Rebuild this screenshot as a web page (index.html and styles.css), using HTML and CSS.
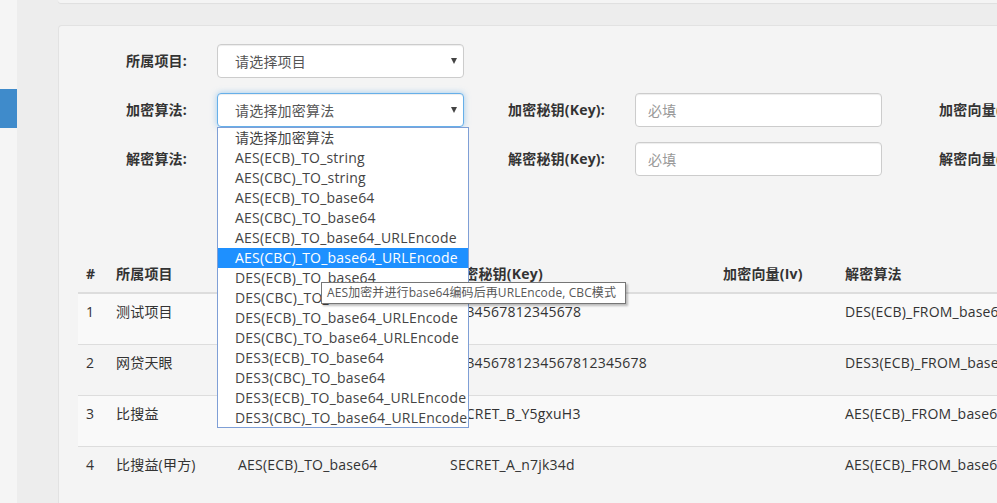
FILE: index.html
```html
<!DOCTYPE html>
<html lang="zh-CN">
<head>
<meta charset="utf-8">
<title>加解密配置</title>
<link rel="stylesheet" href="styles.css">
</head>
<body>
<div class="layout">
  <aside class="sidebar"><div class="sidebar-active"></div></aside>
  <main class="main">
    <div class="topcard"></div>
    <section class="card">
      <div class="form">
        <div class="form-row">
          <label class="label">所属项目:</label>
          <div class="ctrl"><div class="select"><span>请选择项目</span><i class="caret"></i></div></div>
        </div>
        <div class="form-row">
          <label class="label">加密算法:</label>
          <div class="ctrl"><div class="select focus"><span>请选择加密算法</span><i class="caret"></i></div></div>
          <label class="label">加密秘钥(Key):</label>
          <div class="ctrl"><input class="input" placeholder="必填"></div>
          <label class="label">加密向量(Iv):</label>
          <div class="ctrl"><input class="input" placeholder="选填"></div>
        </div>
        <div class="form-row">
          <label class="label">解密算法:</label>
          <div class="ctrl"><div class="select"><span>请选择解密算法</span><i class="caret"></i></div></div>
          <label class="label">解密秘钥(Key):</label>
          <div class="ctrl"><input class="input" placeholder="必填"></div>
          <label class="label">解密向量(Iv):</label>
          <div class="ctrl"><input class="input" placeholder="选填"></div>
        </div>
      </div>
      <table class="table">
        <colgroup>
          <col class="c1"><col class="c2"><col class="c3"><col class="c4"><col class="c5"><col class="c6">
        </colgroup>
        <thead>
          <tr><th>#</th><th>所属项目</th><th>加密算法</th><th>加密秘钥(Key)</th><th>加密向量(Iv)</th><th>解密算法</th></tr>
        </thead>
        <tbody>
          <tr><td>1</td><td>测试项目</td><td>DES(ECB)_TO_base64</td><td>1234567812345678</td><td></td><td>DES(ECB)_FROM_base64</td></tr>
          <tr><td>2</td><td>网贷天眼</td><td>DES3(ECB)_TO_base64</td><td>123456781234567812345678</td><td></td><td>DES3(ECB)_FROM_base64</td></tr>
          <tr><td>3</td><td>比搜益</td><td>AES(ECB)_TO_base64</td><td>SECRET_B_Y5gxuH3</td><td></td><td>AES(ECB)_FROM_base64</td></tr>
          <tr><td>4</td><td>比搜益(甲方)</td><td>AES(ECB)_TO_base64</td><td>SECRET_A_n7jk34d</td><td></td><td>AES(ECB)_FROM_base64</td></tr>
        </tbody>
      </table>
    </section>
  </main>
</div>

<ul class="dropdown">
  <li>请选择加密算法</li>
  <li>AES(ECB)_TO_string</li>
  <li>AES(CBC)_TO_string</li>
  <li>AES(ECB)_TO_base64</li>
  <li>AES(CBC)_TO_base64</li>
  <li>AES(ECB)_TO_base64_URLEncode</li>
  <li class="active">AES(CBC)_TO_base64_URLEncode</li>
  <li>DES(ECB)_TO_base64</li>
  <li>DES(CBC)_TO_base64</li>
  <li>DES(ECB)_TO_base64_URLEncode</li>
  <li>DES(CBC)_TO_base64_URLEncode</li>
  <li>DES3(ECB)_TO_base64</li>
  <li>DES3(CBC)_TO_base64</li>
  <li>DES3(ECB)_TO_base64_URLEncode</li>
  <li>DES3(CBC)_TO_base64_URLEncode</li>
</ul>
<div class="tooltip">AES加密并进行base64编码后再URLEncode, CBC模式</div>
</body>
</html>
```
FILE: styles.css
```css
* { box-sizing: border-box; }
html, body {
  margin: 0;
  padding: 0;
  width: 997px;
  height: 503px;
  overflow: hidden;
  font-family: "Open Sans", "Noto Sans CJK SC", sans-serif;
  font-size: 14px;
  letter-spacing: 0.2px;
  color: #333;
  background: #ededed;
}
.layout {
  display: flex;
  height: 503px;
  overflow: hidden;
}
.sidebar {
  width: 17px;
  flex: none;
  background: #f5f5f5;
  padding-top: 89px;
}
.sidebar-active {
  height: 39px;
  background: #3f8bcb;
}
.main {
  flex: 1;
  min-width: 0;
  padding-left: 41px;
  background: #ededed;
  overflow: hidden;
}
.topcard {
  height: 3px;
  background: #f4f4f4;
  border-bottom-left-radius: 4px;
  box-shadow: 0 1px 1px rgba(0,0,0,0.06);
}
.card {
  margin-top: 22px;
  height: 478px;
  overflow: hidden;
  background: #f4f4f4;
  border: 1px solid #e2e2e2;
  border-right: 0;
  border-bottom: 0;
  border-top-left-radius: 4px;
}
.form {
  padding: 18px 0 0 2px;
  width: 1260px;
}
.form-row {
  display: grid;
  grid-template-columns: 141px 277px 141px 277px 141px 277px;
  margin-bottom: 15px;
}
.label {
  text-align: right;
  padding-right: 15px;
  font-weight: bold;
  line-height: 34px;
  white-space: nowrap;
  color: #333;
}
.ctrl {
  padding: 0 15px;
}
.select, .input {
  display: block;
  width: 100%;
  height: 34px;
  border: 1px solid #ccc;
  border-radius: 4px;
  background: #fff;
  font-family: inherit;
  font-size: 14px;
  letter-spacing: 0.2px;
  color: #555;
}
.select {
  display: flex;
  align-items: center;
  justify-content: space-between;
  padding: 0 6px 0 17px;
  box-shadow: inset 0 1px 1px rgba(0,0,0,0.075);
}
.select.focus {
  border-color: #66afe9;
  box-shadow: inset 0 1px 1px rgba(0,0,0,0.075), 0 0 6px rgba(102,175,233,0.6);
}
.caret {
  width: 0;
  height: 0;
  border-left: 3.5px solid transparent;
  border-right: 3.5px solid transparent;
  border-top: 6px solid #444;
}
.input {
  padding: 0 12px;
  box-shadow: inset 0 1px 1px rgba(0,0,0,0.075);
}
.input::placeholder { color: #999; }

.table {
  margin: 80px 0 0 19px;
  border-collapse: collapse;
  table-layout: fixed;
  width: 1000px;
}
.c1 { width: 30px; }
.c2 { width: 122px; }
.c3 { width: 212px; }
.c4 { width: 273px; }
.c5 { width: 122px; }
.c6 { width: 241px; }
.table th, .table td {
  text-align: left;
  padding: 8px;
  line-height: 20px;
  vertical-align: top;
  white-space: nowrap;
  overflow: hidden;
}
.table th {
  font-weight: bold;
  border-bottom: 2px solid #ddd;
}
.table td {
  height: 51px;
  border-top: 1px solid #ddd;
}
.table tbody tr:nth-child(odd) { background: #f9f9f9; }

.dropdown {
  position: absolute;
  left: 217px;
  top: 127px;
  width: 252px;
  height: 301px;
  margin: 0;
  padding: 0;
  list-style: none;
  background: #fff;
  border: 1px solid #7f9fd6;
}
.dropdown li {
  height: 20px;
  line-height: 20px;
  padding-left: 17px;
  font-size: 14px;
  color: #444;
  white-space: nowrap;
}
.dropdown li.active {
  background: #1e90ff;
  color: #fff;
}
.tooltip {
  position: absolute;
  left: 321px;
  top: 282px;
  width: 305px;
  height: 22px;
  padding: 0 5px;
  line-height: 20px;
  font-size: 12px;
  letter-spacing: 0.1px;
  color: #575757;
  background: #fff;
  border: 1px solid #767676;
  box-shadow: 2px 2px 2px rgba(0,0,0,0.25);
  white-space: nowrap;
}
```
